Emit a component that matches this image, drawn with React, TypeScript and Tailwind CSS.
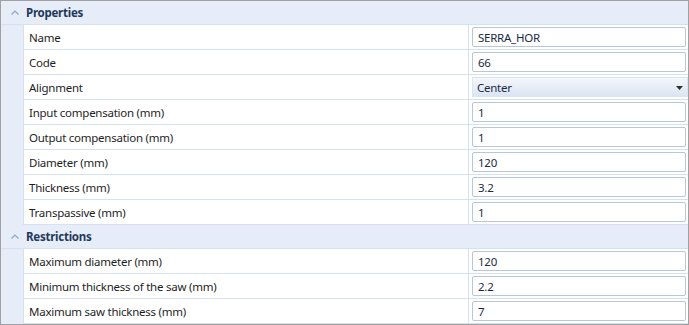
import React from "react";

const font = { fontFamily: '"Segoe UI", "Noto Sans", "Open Sans", sans-serif' };

function Chevron() {
  return (
    <svg width="8" height="5" viewBox="0 0 8 5" className="block">
      <polyline points="0.5,4.5 4,1 7.5,4.5" fill="none" stroke="#8ea6c6" strokeWidth="1.2" />
    </svg>
  );
}

function Header({ title }: { title: string }) {
  return (
    <div className="flex h-[24px] items-center bg-[#e6edf8] border-b border-[#d5e0f0]">
      <div className="flex w-[23px] justify-center pl-[5px]">
        <Chevron />
      </div>
      <div className="pl-[2px] pt-[1px] text-[11.5px] font-bold tracking-[-0.25px] text-[#1e395b]">{title}</div>
    </div>
  );
}

function Row({ label, value, dropdown }: { label: string; value: string; dropdown?: boolean }) {
  return (
    <div className="flex h-[25px] bg-[#e6edf8]">
      <div className="w-[22px] shrink-0" />
      <div className="flex flex-1 border-l border-b border-[#d5e0f0] bg-white">
        <div className="flex w-[444px] shrink-0 items-center pl-[5px] pt-[1px] text-[11.5px] tracking-[-0.25px] text-[#1e1e1e]">{label}</div>
        <div className="flex flex-1 border-l border-[#d5e0f0] py-[2px] pl-[3px] pr-[2px]">
          {dropdown ? (
            <div className="-mr-[2px] flex flex-1 items-center justify-between border border-[#dbe4f1] bg-gradient-to-b from-[#f4f7fc] to-[#dbe5f3] pl-[4px] pr-[4px] pt-[1px] text-[11.5px] tracking-[-0.25px] text-[#1b2a44]">
              <span>{value}</span>
              <svg width="7" height="4" viewBox="0 0 7 4">
                <polygon points="0,0 7,0 3.5,4" fill="#303030" />
              </svg>
            </div>
          ) : (
            <div className="flex flex-1 items-center rounded-[2px] border border-[#b8c6dc] bg-white pl-[5px] pt-[1px] text-[11.5px] tracking-[-0.25px] text-[#1b2a44]">
              {value}
            </div>
          )}
        </div>
      </div>
    </div>
  );
}

export default function App() {
  return (
    <div className="h-[325px] w-[689px] overflow-hidden border border-[#a0a0a0] bg-[#e6edf8]" style={font}>
      <Header title="Properties" />
      <Row label="Name" value="SERRA_HOR" />
      <Row label="Code" value="66" />
      <Row label="Alignment" value="Center" dropdown />
      <Row label="Input compensation (mm)" value="1" />
      <Row label="Output compensation (mm)" value="1" />
      <Row label="Diameter (mm)" value="120" />
      <Row label="Thickness (mm)" value="3.2" />
      <Row label="Transpassive (mm)" value="1" />
      <Header title="Restrictions" />
      <Row label="Maximum diameter (mm)" value="120" />
      <Row label="Minimum thickness of the saw (mm)" value="2.2" />
      <Row label="Maximum saw thickness (mm)" value="7" />
    </div>
  );
}
